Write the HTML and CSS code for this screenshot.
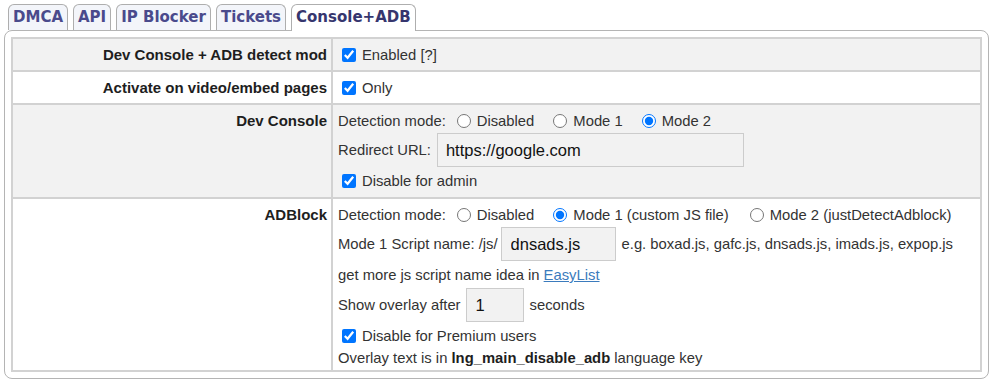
FILE: index.html
```html
<!DOCTYPE html>
<html>
<head>
<meta charset="utf-8">
<title>Console+ADB</title>
<link rel="stylesheet" href="styles.css">
</head>
<body>
<div class="wrap">
  <ul class="tabs">
    <li class="tab">DMCA</li>
    <li class="tab">API</li>
    <li class="tab">IP Blocker</li>
    <li class="tab">Tickets</li>
    <li class="tab active">Console+ADB</li>
  </ul>
  <div class="panel">
    <table class="settings">
      <tr class="alt">
        <th>Dev Console + ADB detect mod</th>
        <td><div class="line single"><label class="chk"><input type="checkbox" checked>Enabled [?]</label></div></td>
      </tr>
      <tr>
        <th>Activate on video/embed pages</th>
        <td><div class="line single"><label class="chk"><input type="checkbox" checked>Only</label></div></td>
      </tr>
      <tr class="alt">
        <th>Dev Console</th>
        <td class="dev">
          <div class="line l1">Detection mode:
            <label class="opt first"><input type="radio" name="dc">Disabled</label>
            <label class="opt"><input type="radio" name="dc">Mode 1</label>
            <label class="opt"><input type="radio" name="dc" checked>Mode 2</label>
          </div>
          <div class="line tall">Redirect URL: <input class="txt url" type="text" value="https://google.com"></div>
          <div class="line chkline"><label class="chk"><input type="checkbox" checked>Disable for admin</label></div>
        </td>
      </tr>
      <tr>
        <th>ADBlock</th>
        <td class="adb">
          <div class="line l1">Detection mode:
            <label class="opt first"><input type="radio" name="ab">Disabled</label>
            <label class="opt"><input type="radio" name="ab" checked>Mode 1 (custom JS file)</label>
            <label class="opt wide"><input type="radio" name="ab">Mode 2 (justDetectAdblock)</label>
          </div>
          <div class="line tall">Mode 1 Script name: /js/<input class="txt script" type="text" value="dnsads.js"><span class="hint">e.g. boxad.js, gafc.js, dnsads.js, imads.js, expop.js</span></div>
          <div class="line more">get more js script name idea in&nbsp;<a class="link" href="#">EasyList</a></div>
          <div class="line taller">Show overlay after<input class="txt secs" type="text" value="1"><span class="hint">seconds</span></div>
          <div class="line chkline"><label class="chk"><input type="checkbox" checked>Disable for Premium users</label></div>
          <div class="line last">Overlay text is in&nbsp;<b>lng_main_disable_adb</b>&nbsp;language key</div>
        </td>
      </tr>
    </table>
  </div>
</div>
</body>
</html>
```

FILE: styles.css
```css
html, body {
  margin: 0;
  padding: 0;
  background: #ffffff;
}

.wrap {
  padding: 4px 2px 0 4px;
  font-family: "Liberation Sans", Arial, sans-serif;
}

.tabs {
  list-style: none;
  margin: 0 0 0 4px;
  padding: 0;
  display: flex;
  gap: 5px;
  align-items: flex-end;
}

.tab {
  font-family: "DejaVu Sans", Verdana, sans-serif;
  font-weight: bold;
  font-size: 15px;
  line-height: 20px;
  color: #4a4a8c;
  background: #f3f5fa;
  border: 1px solid #aeaeae;
  border-bottom: 0;
  border-radius: 6px 6px 0 0;
  padding: 2px 4px 3px;
}

.tab.active {
  background: #ffffff;
  color: #36366e;
  position: relative;
  z-index: 1;
  margin-bottom: -1px;
  padding-bottom: 4px;
}

.panel {
  border: 1px solid #b4b4b4;
  border-radius: 8px;
  padding: 6px;
}

.settings {
  width: 100%;
  border-collapse: collapse;
  border: 2px solid #d2d2d2;
}

.settings th,
.settings td {
  border: 2px solid #d2d2d2;
  vertical-align: top;
}

.settings tr.alt th,
.settings tr.alt td {
  background: #f2f2f2;
}

.settings th {
  width: 309px;
  text-align: right;
  font-size: 15px;
  font-weight: bold;
  line-height: 19px;
  color: #1e1e1e;
  padding: 6px 4px 0 5px;
  white-space: nowrap;
}

.settings td {
  font-size: 14.8px;
  color: #333333;
  padding: 0 5px;
}

.settings td.dev {
  padding-top: 5px;
  padding-bottom: 3px;
}

.settings td.adb {
  padding-top: 5px;
  padding-bottom: 2px;
}

.line {
  display: flex;
  align-items: center;
  height: 22px;
  white-space: nowrap;
}

.line.single {
  height: 31px;
}

.line.tall {
  height: 36px;
}

.line.more {
  margin-top: 2px;
}

.line.taller {
  height: 38px;
}

.line.chkline {
  height: 24px;
}

.dev .line.chkline {
  height: 26px;
}

.line.last {
  height: 20px;
}

.chk {
  display: inline-flex;
  align-items: center;
}

.chk input {
  width: 14px;
  height: 14px;
  margin: 0 6px 0 4px;
  accent-color: #0075ff;
}

.opt {
  display: inline-flex;
  align-items: center;
  margin-left: 19px;
}

.opt.first {
  margin-left: 11px;
}

.opt.wide {
  margin-left: 21px;
}

.opt input {
  width: 14px;
  height: 14px;
  margin: 0 6px 0 0;
  accent-color: #0075ff;
}

.txt {
  box-sizing: border-box;
  height: 34px;
  border: 1px solid #cccccc;
  background: #f2f2f2;
  font-family: "Liberation Sans", Arial, sans-serif;
  font-size: 16.5px;
  color: #111111;
  padding: 0 9px;
  outline: none;
}

.txt.url {
  width: 307px;
  margin-left: 6px;
  padding-left: 8px;
}

.txt.script {
  width: 115px;
  margin-left: 3px;
}

.txt.secs {
  width: 58px;
  margin-left: 5px;
}

.hint {
  margin-left: 6px;
}

.link {
  color: #3b7bbd;
  text-decoration: underline;
}

.settings td b {
  color: #1e1e1e;
}
```
